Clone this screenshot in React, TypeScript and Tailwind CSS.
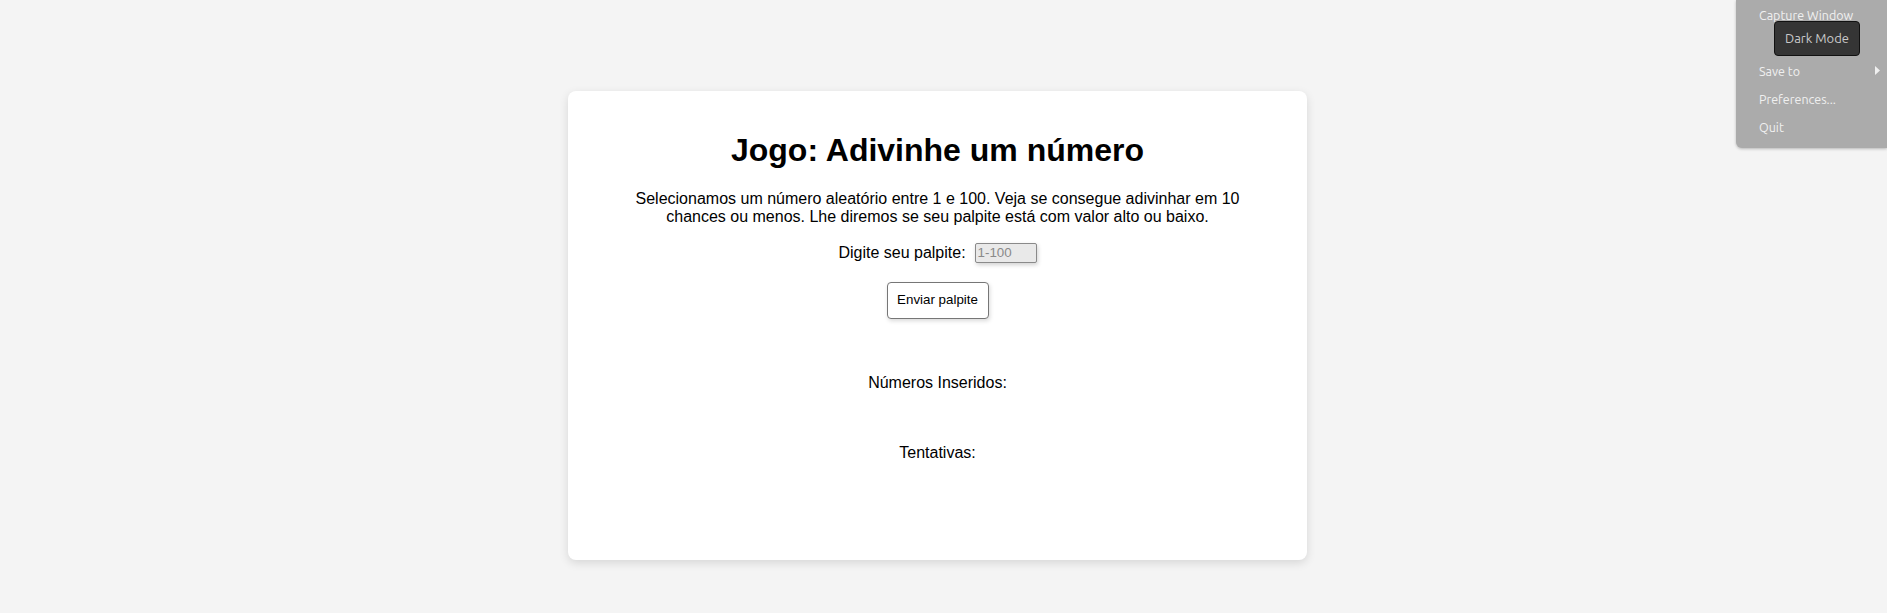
import { ChevronRight } from "lucide-react";

function ScreenshotMenu() {
    return <div className="absolute top-0 right-0 w-[151px] h-[148px] bg-[#ababab] rounded-bl-[6px] shadow-[0_1px_3px_rgba(0,0,0,0.25)] font-['Ubuntu','Noto_Sans',sans-serif] text-[12.5px] text-[#f0f0f0]">
        <div className="absolute left-[23px] top-[6px] leading-[18px]">Capture Window</div>
        <div className="absolute left-[23px] top-[62px] leading-[18px]">Save to</div>
        <svg className="absolute left-[139px] top-[66px]" width="5" height="9" viewBox="0 0 5 9">
            <path d="M0 0 L5 4.5 L0 9 Z" fill="#f0f0f0" />
        </svg>
        <div className="absolute left-[23px] top-[90px] leading-[18px]">Preferences...</div>
        <div className="absolute left-[23px] top-[118px] leading-[18px]">Quit</div>
        <div className="absolute left-[38px] top-[21px] w-[86px] h-[35px] bg-[#353535] border border-[#111] rounded-[4px] flex items-center justify-center text-[#c9c9c9] text-[13px]">
            Dark Mode
        </div>
    </div>
}

export default function App() {
    return <div className="relative w-full h-[613px] bg-[#f4f4f4] overflow-hidden font-['Liberation_Sans',Arial,sans-serif] text-black">
        <div className="flex justify-center pt-[91px] pr-[12px]">
            <div className="w-[739px] h-[469px] bg-white rounded-[8px] shadow-[0_3px_10px_rgba(0,0,0,0.12)] flex flex-col items-center pt-[41px] px-[60px]">
                <h1 className="text-[32px] font-bold leading-[37px]">Jogo: Adivinhe um número</h1>
                <p className="mt-[21px] text-base leading-[18.4px] text-center">
                    Selecionamos um número aleatório entre 1 e 100. Veja se consegue adivinhar em 10 chances ou menos. Lhe diremos se seu palpite está com valor alto ou baixo.
                </p>
                <div className="mt-[16px] flex items-center gap-[9px] h-[20px]">
                    <label className="text-base leading-[18.4px]">Digite seu palpite:</label>
                    <input
                        type="number"
                        placeholder="1-100"
                        className="w-[62px] h-[20px] bg-[#e9e9e9] border border-[#8a8a8a] rounded-[2px] px-[2px] text-[13.33px] text-black placeholder:text-[#8a8a8a] shadow-[1px_2px_4px_rgba(0,0,0,0.18)] outline-none"
                    />
                </div>
                <button className="mt-[19px] w-[102px] h-[37px] bg-white border border-[#767676] rounded-[4px] text-[13.33px] shadow-[1px_2px_4px_rgba(0,0,0,0.15)]">
                    Enviar palpite
                </button>
                <p className="mt-[55px] text-base leading-[18.4px]">Números Inseridos:</p>
                <p className="mt-[52px] text-base leading-[18.4px]">Tentativas:</p>
            </div>
        </div>
        <ScreenshotMenu />
    </div>
}
